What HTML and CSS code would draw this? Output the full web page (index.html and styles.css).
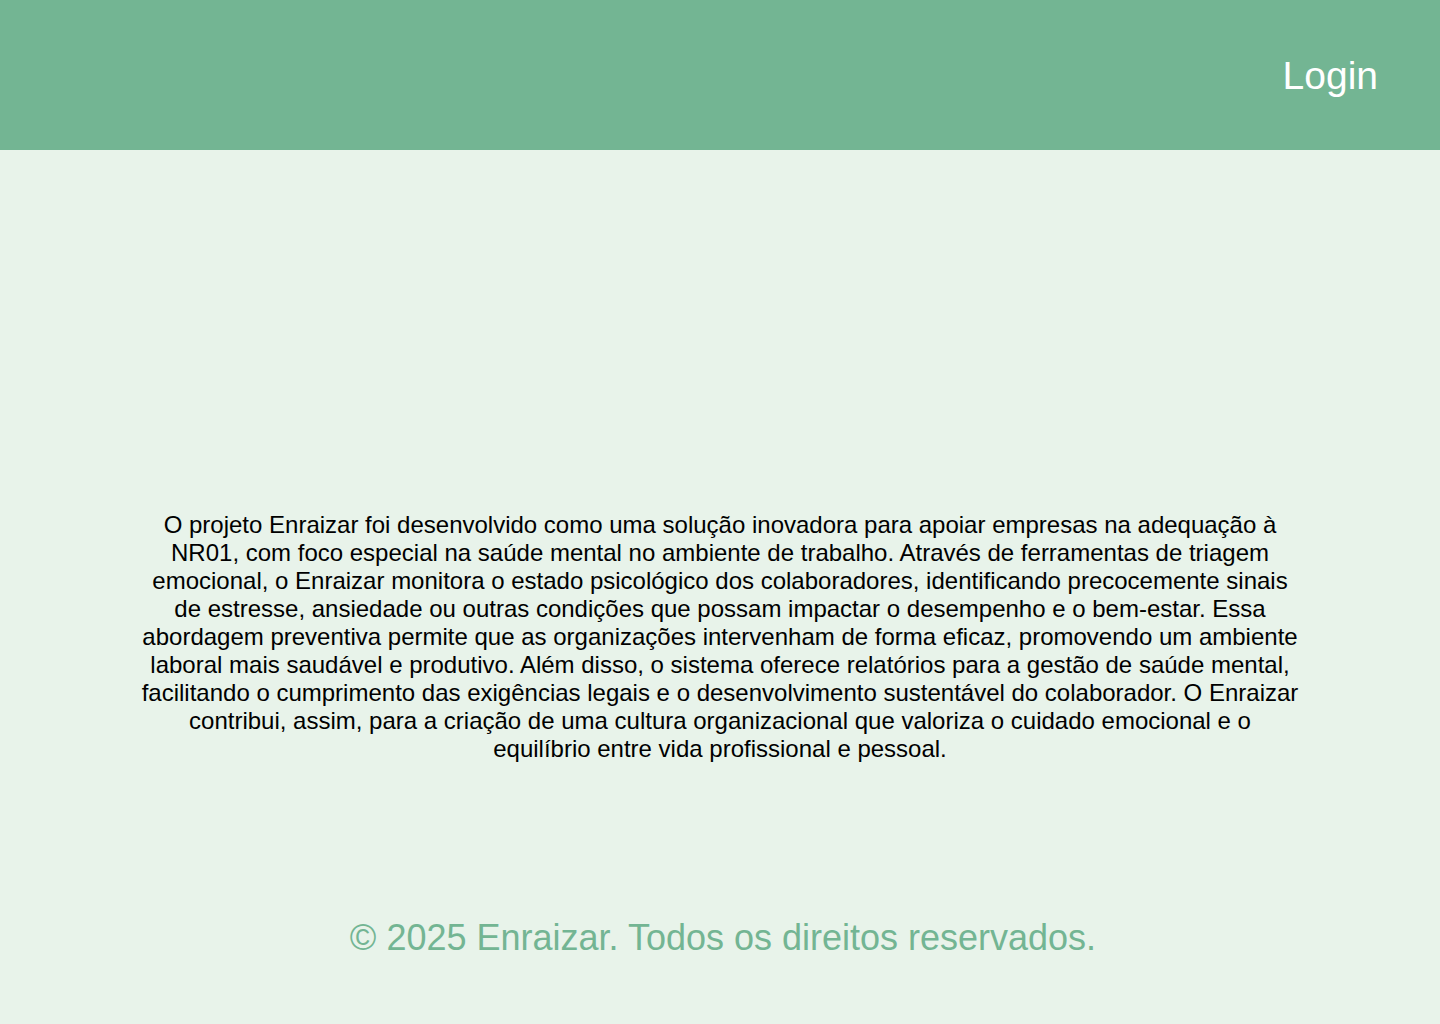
FILE: index.html
```html
<!DOCTYPE html>
<html lang="pt-BR">
<head>
<meta charset="utf-8">
<title>Enraizar</title>
<link rel="stylesheet" href="styles.css">
</head>
<body>
<header class="topbar">
  <a class="login" href="#">Login</a>
</header>
<main class="content">
  <p class="intro">O projeto Enraizar foi desenvolvido como uma solução inovadora para apoiar empresas na adequação à NR01, com foco especial na saúde mental no ambiente de trabalho. Através de ferramentas de triagem emocional, o Enraizar monitora o estado psicológico dos colaboradores, identificando precocemente sinais de estresse, ansiedade ou outras condições que possam impactar o desempenho e o bem-estar. Essa abordagem preventiva permite que as organizações intervenham de forma eficaz, promovendo um ambiente laboral mais saudável e produtivo. Além disso, o sistema oferece relatórios para a gestão de saúde mental, facilitando o cumprimento das exigências legais e o desenvolvimento sustentável do colaborador. O Enraizar contribui, assim, para a criação de uma cultura organizacional que valoriza o cuidado emocional e o equilíbrio entre vida profissional e pessoal.</p>
</main>
<footer class="footer">
  <p class="copy">© 2025 Enraizar. Todos os direitos reservados.</p>
</footer>
</body>
</html>
```
FILE: styles.css
```css
html, body {
  margin: 0;
  padding: 0;
}
body {
  background: #e8f3ea;
  font-family: "Liberation Sans", Arial, sans-serif;
  min-height: 1024px;
}
.topbar {
  height: 150px;
  background: #73b593;
  display: flex;
  align-items: center;
  justify-content: flex-end;
  padding: 0 62px 0 0;
  box-sizing: border-box;
}
.login {
  color: #ffffff;
  text-decoration: none;
  font-size: 39px;
  line-height: 1;
}
.content {
  padding: 361px 140px 0;
}
.intro {
  margin: 0;
  font-size: 24px;
  line-height: 28px;
  text-align: center;
  color: #000;
}
.footer {
  padding: 154px 0 0 6px;
}
.copy {
  margin: 0;
  text-align: center;
  font-size: 36px;
  line-height: 41px;
  color: #73b593;
}
```
